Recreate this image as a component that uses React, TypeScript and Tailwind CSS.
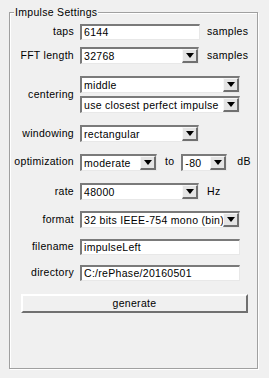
import React from "react";

const font = { fontFamily: '"Liberation Sans", "Noto Sans CJK JP", sans-serif' };

function Arrow() {
  return (
    <div className="h-full w-[16px] shrink-0 bg-[#e4e4e4] border-t border-l border-t-[#f8f8f8] border-l-[#f8f8f8] border-b-2 border-r-2 border-b-[#707070] border-r-[#707070] flex items-center justify-center">
      <svg width="8" height="5" viewBox="0 0 8 5">
        <polygon points="0,0 8,0 4,5" fill="#000" />
      </svg>
    </div>
  );
}

function Select({ value, w }: { value: string; w: string }) {
  return (
    <div className={`${w} h-[17px] bg-white border-t-2 border-l-2 border-t-[#7a7a7a] border-l-[#7a7a7a] border-b border-r border-b-[#e8e8e8] border-r-[#e8e8e8] flex items-stretch`}>
      <div className="flex-1 pl-[2px] leading-[14px] whitespace-nowrap overflow-hidden">{value}</div>
      <Arrow />
    </div>
  );
}

function Input({ value, w }: { value: string; w: string }) {
  return (
    <div className={`${w} h-[16px] bg-white border-t-2 border-l-2 border-t-[#7a7a7a] border-l-[#7a7a7a] border-b border-r border-b-[#e8e8e8] border-r-[#e8e8e8] pl-[2px] leading-[13px] whitespace-nowrap`}>
      {value}
    </div>
  );
}

function Label({ children }: { children: React.ReactNode }) {
  return <div className="w-[74px] shrink-0 text-right mr-[6px]">{children}</div>;
}

export default function App() {
  return (
    <div style={font} className="w-[269px] h-[378px] bg-[#f0f0f0] relative text-[10.5px] tracking-[0.3px] text-black">
      <div className="absolute left-[9px] top-[12px] w-[249px] h-[357px] border border-[#a0a0a0] shadow-[1px_1px_0_#ffffff,inset_1px_1px_0_#ffffff]" />
      <div className="absolute left-[14px] top-[5px] px-[1px] bg-[#f0f0f0] leading-[14px]">Impulse Settings</div>
      <div className="relative flex flex-col pt-[23px]">
        <div className="flex items-center h-[17px]">
          <Label>taps</Label>
          <Input value="6144" w="w-[120px]" />
          <span className="ml-[7px]">samples</span>
        </div>
        <div className="flex items-center h-[17px] mt-[7px]">
          <Label>FFT length</Label>
          <Select value="32768" w="w-[119px]" />
          <span className="ml-[8px]">samples</span>
        </div>
        <div className="flex items-center mt-[12px]">
          <Label>centering</Label>
          <div className="flex flex-col gap-[3px]">
            <Select value="middle" w="w-[160px]" />
            <Select value="use closest perfect impulse" w="w-[160px]" />
          </div>
        </div>
        <div className="flex items-center h-[17px] mt-[12px]">
          <Label>windowing</Label>
          <Select value="rectangular" w="w-[119px]" />
        </div>
        <div className="flex items-center h-[18px] mt-[11px]">
          <Label>optimization</Label>
          <Select value="moderate" w="w-[77px]" />
          <span className="ml-[8px]">to</span>
          <div className="ml-[7px]">
            <Select value="-80" w="w-[46px]" />
          </div>
          <span className="ml-[10px]">dB</span>
        </div>
        <div className="flex items-center h-[17px] mt-[12px]">
          <Label>rate</Label>
          <Select value="48000" w="w-[119px]" />
          <span className="ml-[8px]">Hz</span>
        </div>
        <div className="flex items-center h-[17px] mt-[11px]">
          <Label>format</Label>
          <Select value="32 bits IEEE-754 mono (bin)" w="w-[160px]" />
        </div>
        <div className="flex items-center h-[16px] mt-[11px]">
          <Label>filename</Label>
          <Input value="impulseLeft" w="w-[160px]" />
        </div>
        <div className="flex items-center h-[16px] mt-[10px]">
          <Label>directory</Label>
          <Input value="C:/rePhase/20160501" w="w-[160px]" />
        </div>
        <div className="ml-[21px] mt-[13px] w-[227px] h-[19px] bg-[#f0f0f0] border-t-2 border-l-2 border-t-white border-l-white border-b-2 border-r-2 border-b-[#707070] border-r-[#707070] flex items-center justify-center">
          generate
        </div>
      </div>
    </div>
  );
}
